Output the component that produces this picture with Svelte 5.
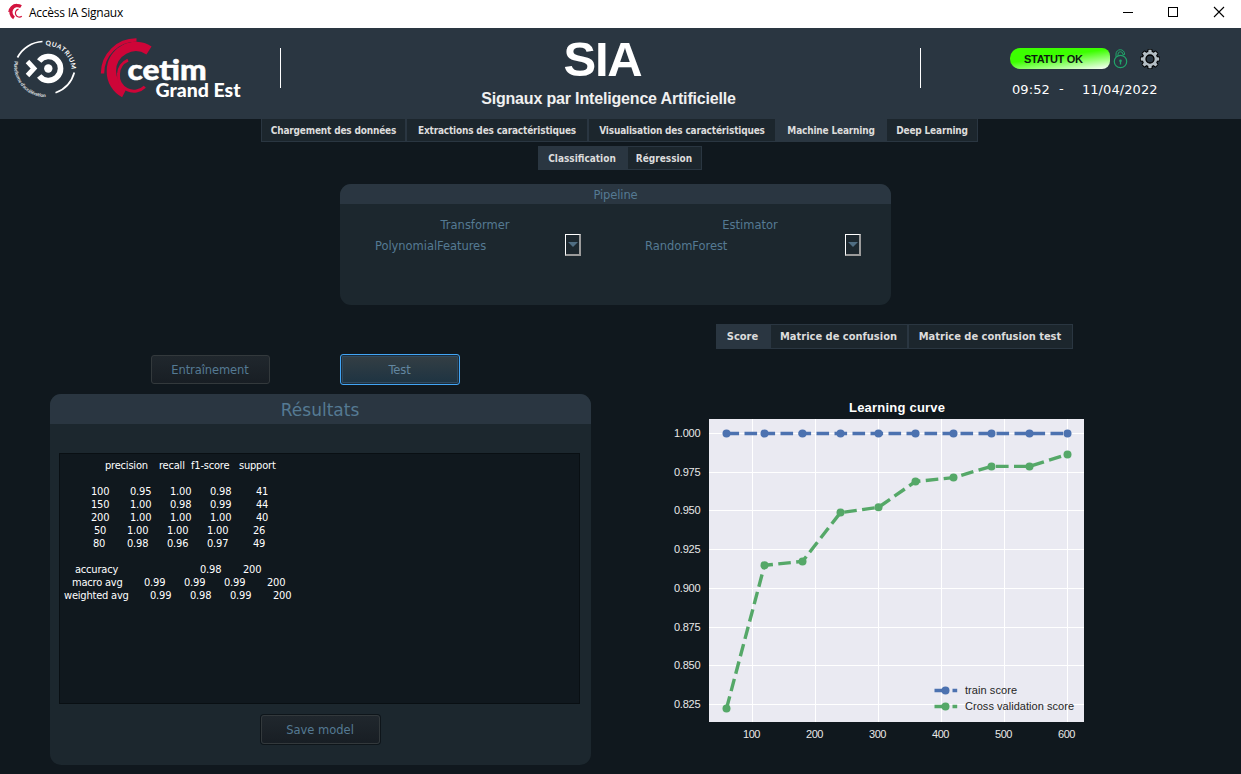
<script>
  const mainTabs = [
    { label: 'Chargement des données', w: 145 },
    { label: 'Extractions des caractéristiques', w: 182 },
    { label: 'Visualisation des caractéristiques', w: 188 },
    { label: 'Machine Learning', w: 110, active: true },
    { label: 'Deep Learning', w: 92 }
  ];
  const subTabs = [
    { label: 'Classification', w: 89, active: true },
    { label: 'Régression', w: 75 }
  ];
  const scoreTabs = [
    { label: 'Score', w: 54, active: true },
    { label: 'Matrice de confusion', w: 138 },
    { label: 'Matrice de confusion test', w: 165 }
  ];
  const selectors = [
    { title: 'Transformer', value: 'PolynomialFeatures' },
    { title: 'Estimator', value: 'RandomForest' }
  ];

  // Each cell is [start offset, text]; the report is laid out with uneven columns.
  const report = [
    [[45, 'precision'], [99, 'recall'], [131, 'f1-score'], [179, 'support']],
    [],
    [[31, '100'], [70, '0.95'], [110, '1.00'], [150, '0.98'], [196, '41']],
    [[31, '150'], [70, '1.00'], [110, '0.98'], [150, '0.99'], [196, '44']],
    [[31, '200'], [70, '1.00'], [110, '1.00'], [150, '1.00'], [196, '40']],
    [[34, '50'], [67, '1.00'], [107, '1.00'], [147, '1.00'], [193, '26']],
    [[33, '80'], [67, '0.98'], [107, '0.96'], [147, '0.97'], [193, '49']],
    [],
    [[15, 'accuracy'], [140, '0.98'], [183, '200']],
    [[12, 'macro avg'], [84, '0.99'], [124, '0.99'], [164, '0.99'], [207, '200']],
    [[4, 'weighted avg'], [90, '0.99'], [130, '0.98'], [170, '0.99'], [213, '200']]
  ];
  const columns = (row) =>
    row.map((c, i) => (i ? c[0] - row[i - 1][0] : c[0]) + 'px').join(' ') + ' 1fr';

  const xTicks = [100, 200, 300, 400, 500, 600].map((v, i) => ({ v, x: 92.5 + i * 63 }));
  const yTicks = [
    ['1.000', 38.5], ['0.975', 77.5], ['0.950', 115.5], ['0.925', 154.5],
    ['0.900', 193.5], ['0.875', 232.5], ['0.850', 270.5], ['0.825', 309.5]
  ];
  const px = [66.5, 104.5, 142.5, 180.5, 218.5, 255.5, 293.5, 331.5, 369.5, 407.5];
  const cv = [313.5, 170.3, 166.4, 117.6, 112.3, 86.5, 82.6, 71.4, 71.4, 59.4];
  const cvLine = px.map((x, i) => `${x},${cv[i]}`).join(' ');
  const teeth = [0, 45, 90, 135, 180, 225, 270, 315];
</script>

{#snippet tabs(items, cls)}
  <nav class="tabs {cls}">
    {#each items as t}
      <button class="tab" class:active={t.active} style="width:{t.w}px">{t.label}</button>
    {/each}
  </nav>
{/snippet}

<div class="window">
  <div class="titlebar">
    <svg class="appicon" width="16" height="18" viewBox="0 0 16 18" fill="none">
      <path d="M13 3.600A6 6 0 0 0 6 14.800" stroke="#d3143f" stroke-width="3.200" />
      <path d="M0.900 9A8 8 0 0 1 9 1.500" stroke="#d3143f" stroke-width="1.300" />
      <path d="M10.500 6.200A4 4 0 1 0 13.800 13.300" stroke="#d3143f" stroke-width="1.200" />
    </svg>
    <span class="apptitle">Accèss IA Signaux</span>
    <svg class="winctl" width="104" height="12" viewBox="0 0 104 12" fill="none" stroke="#000" shape-rendering="crispEdges">
      <path d="M0 6.5h10" />
      <path d="M45.5 1.5h9v9h-9z" />
      <path d="M91 1l10 10M101 1l-10 10" shape-rendering="auto" stroke-width="1.1" />
    </svg>
  </div>

  <header class="header">
    <svg class="logos" width="250" height="91" viewBox="0 28 250 91">
      <g fill="none" stroke="#fff">
        <path d="M17.500 57.500A30 30 0 0 1 42.500 41.500" stroke-width="1.700" />
        <path d="M74.300 72.500A30 30 0 0 1 55.500 92.800" stroke-width="1.700" />
        <path d="M39.200 61A12 12 0 1 1 39.200 76" stroke-width="5.600" />
        <path d="M27.500 61.500l6.500 7-6.500 7" stroke-width="4.800" />
      </g>
      <circle cx="48.300" cy="68.500" r="4.200" fill="#fff" />
      <path id="arcTop" d="M45.500 45.500A25.500 25.500 0 0 1 71.500 73" fill="none" />
      <path id="arcLow" d="M14.500 61A31.500 31.500 0 0 0 54 96" fill="none" />
      <text class="q1"><textPath href="#arcTop" textLength="39">QUATRIUM</textPath></text>
      <text class="q2"><textPath href="#arcLow" textLength="54">Plateforme d'accélération</textPath></text>
      <g fill="none" stroke="#ce0538">
        <path d="M102.500 73.500A33.500 33.500 0 0 1 136.500 40" stroke-width="3.400" />
        <path d="M149 50.500A24.300 24.300 0 0 0 111.400 71A24.300 24.300 0 0 0 124.300 93" stroke-width="9.400" />
        <path d="M128 60.200A15.500 15.500 0 0 0 118.500 74A15.500 15.500 0 0 0 144.800 86.800" stroke-width="3" />
      </g>
      <text class="cetim" x="127.500" y="80" textLength="79" lengthAdjust="spacingAndGlyphs">cetim</text>
      <text class="grand" x="155.500" y="96.500" textLength="85" lengthAdjust="spacingAndGlyphs">Grand Est</text>
    </svg>
    <i class="rule r1"></i>
    <div class="brand">
      <h1>SIA</h1>
      <p>Signaux par Inteligence Artificielle</p>
    </div>
    <i class="rule"></i>
    <div class="status">
      <div class="statrow">
        <span class="pill">STATUT OK</span>
        <svg class="lock" width="16" height="22" viewBox="0 0 16 22" fill="none" stroke="#21a56a" stroke-width="1.200">
          <circle cx="7.500" cy="13.500" r="6.200" />
          <path d="M3 8.800V6A4.300 4.300 0 0 1 11.600 6V6.600H9.900V6.200A2.400 2.400 0 0 0 5 6.200V7.600" stroke-width="1" />
          <path d="M7.500 13v3.500" stroke-width="1.300" />
          <circle cx="7.500" cy="12.700" r="1.300" fill="#21a56a" stroke="none" />
        </svg>
        <svg class="gear" width="22" height="22" viewBox="-11 -11 22 22">
          <g fill="#000" stroke="#000" stroke-width="2" stroke-linejoin="round">
            {#each teeth as a}
              <path d="M-2 -6L-1.500 -9H1.500L2 -6Z" transform="rotate({a})" />
            {/each}
            <circle r="7" />
          </g>
          <g fill="#b4bec4">
            {#each teeth as a}
              <path d="M-2 -5L-1.500 -9.200H1.500L2 -5Z" transform="rotate({a})" />
            {/each}
            <circle r="7.200" />
          </g>
          <circle r="4" fill="#2a3641" stroke="#000" stroke-width="1.300" />
        </svg>
      </div>
      <div class="clock"><span>09:52</span><span class="dash">-</span><span>11/04/2022</span></div>
    </div>
  </header>

  <main>
    {@render tabs(mainTabs, 'maintabs')}
    {@render tabs(subTabs, 'subtabs')}

    <section class="panel pipeline">
      <h2>Pipeline</h2>
      <div class="selectors">
        {#each selectors as s}
          <div class="selector">
            <div class="seltitle">{s.title}</div>
            <div class="selrow">
              <span>{s.value}</span>
              <button class="drop" aria-label={s.title}><i></i></button>
            </div>
          </div>
        {/each}
      </div>
    </section>

    <div class="work">
      <div class="left">
        <div class="actions">
          <button class="btn">Entraînement</button>
          <button class="btn focus">Test</button>
        </div>
        <section class="panel results">
          <h2>Résultats</h2>
          <div class="report">
            {#each report as row}
              <div class="line" style="grid-template-columns:{columns(row)}">
                <span></span>{#each row as c}<span>{c[1]}</span>{/each}
              </div>
            {/each}
          </div>
          <button class="btn save">Save model</button>
        </section>
      </div>

      <div class="right">
        {@render tabs(scoreTabs, 'scoretabs')}
        <svg class="chart" width="440" height="355" viewBox="0 0 440 355">
          <text class="title" x="237" y="17" text-anchor="middle" textLength="96">Learning curve</text>
          <rect x="49" y="24" width="375" height="303" fill="#eaeaf2" />
          <g stroke="#fff" stroke-width="1" shape-rendering="crispEdges">
            {#each xTicks as t}<path d="M{t.x} 24V327" />{/each}
            {#each yTicks as t}<path d="M49 {t[1]}H424" />{/each}
          </g>
          <g fill="none" stroke-width="3.400" stroke-dasharray="12.600 5.400">
            <path d="M66.500 38.500H407.500" stroke="#4c72b0" />
            <polyline points={cvLine} stroke="#55a868" stroke-linejoin="round" />
            <path d="M274.500 295.500h22.700" stroke="#4c72b0" />
            <path d="M274.500 311.500h22.700" stroke="#55a868" />
          </g>
          {#each px as x, i}
            <circle cx={x} cy="38.500" r="4" fill="#4c72b0" />
            <circle cx={x} cy={cv[i]} r="4" fill="#55a868" />
          {/each}
          <circle cx="285.500" cy="295.500" r="4" fill="#4c72b0" />
          <circle cx="285.500" cy="311.500" r="4" fill="#55a868" />
          <text class="legend" x="305" y="299" textLength="52">train score</text>
          <text class="legend" x="305" y="315" textLength="109">Cross validation score</text>
          {#each xTicks as t}<text class="tick" x={t.x - 0.8} y="343" text-anchor="middle" textLength="17.500">{t.v}</text>{/each}
          {#each yTicks as t}<text class="tick" x="40.500" y={t[1] + 3.5} text-anchor="end" textLength="26.500">{t[0]}</text>{/each}
        </svg>
      </div>
    </div>
  </main>
</div>

<style>
  :global(body) { margin: 0; background: #10181e; }
  * { box-sizing: border-box; }
  .window {
    width: 1241px; height: 774px; overflow: hidden;
    display: flex; flex-direction: column;
    background: #10181e; font-family: "DejaVu Sans", Verdana, sans-serif;
  }
  button { font: inherit; margin: 0; padding: 0; }
  h1, h2, p { margin: 0; font-weight: normal; }

  .titlebar { height: 28px; flex: none; background: #fff; display: flex; align-items: flex-start; padding-left: 8px; }
  .appicon { margin-top: 3px; }
  .apptitle { margin: 4px 0 0 5px; font: 12px/18px "Open Sans", sans-serif; letter-spacing: -0.25px; color: #000; }
  .winctl { margin: 6px 14px 0 auto; }

  .header { height: 91px; flex: none; background: #2a3641; display: flex; align-items: flex-start; color: #fff; }
  .logos { flex: none; }
  .q1 { font: bold 6.5px Lato, sans-serif; fill: #fff; }
  .q2 { font: bold 4.8px Lato, sans-serif; fill: #e4e8ea; }
  .cetim { font: 900 28px Lato, sans-serif; fill: #fff; stroke: #fff; stroke-width: 0.5px; }
  .grand { font: 900 18px Lato, sans-serif; fill: #fff; }
  .rule { width: 1px; height: 40px; background: #fff; margin-top: 20px; flex: none; }
  .r1 { margin-left: 30px; }
  .brand { width: 639px; text-align: center; font-family: "Liberation Sans", Arial, sans-serif; }
  h1 { font-size: 49px; line-height: 56px; font-weight: bold; letter-spacing: -1.2px; margin: 3px 0 0 4px; }
  .brand p { font-size: 16px; font-weight: bold; line-height: 20px; letter-spacing: -0.17px; color: #f0f0f0; margin: 2px 0 0 16px; }
  .status { margin-left: 89px; }
  .statrow { display: flex; align-items: flex-start; padding-top: 20px; height: 46px; }
  .pill {
    width: 100px; height: 21px; border-radius: 10px 8px 8px 10px; padding-left: 14px;
    background: linear-gradient(172deg, #3cff00 42%, #fff 100%);
    font: bold 11px/22px "Liberation Sans", Arial, sans-serif; color: #0c1a10; letter-spacing: -0.3px;
  }
  .lock { margin: 0 0 0 3px; }
  .gear { margin-left: 10px; }
  .clock { display: flex; font-size: 13px; line-height: 18px; letter-spacing: 0.08px; margin: 7px 0 0 2px; }
  .dash { width: 5px; margin: -1px 18px 0 9px; }

  main { flex: 1; display: flex; flex-direction: column; }
  .tabs { display: flex; }
  .tab {
    border: 1px solid #2a3641; background: #1c262d; color: #dcdcdc; white-space: nowrap;
    font: bold 10px/20px "DejaVu Sans Condensed", "DejaVu Sans", sans-serif; font-stretch: condensed;
    height: 24px; text-align: center; padding-top: 1px;
  }
  .tab.active { background: #2a3641; }
  .maintabs { margin-left: 261px; }
  .maintabs .tab { height: 23px; border-top: 0; padding-top: 2px; letter-spacing: -0.18px; }
  .subtabs { margin: 4px 0 0 538px; }
  .subtabs .tab { padding-top: 2px; padding-right: 1px; }
  .scoretabs { margin-left: 125px; }
  .scoretabs .tab { height: 25px; font-size: 11px; padding: 1px 1px 0 0; }

  .panel { background: #1c272e; border-radius: 11px; overflow: hidden; color: #557a93; }
  .panel h2 { background: #2a3641; text-align: center; color: #557a93; }
  .pipeline { width: 551px; height: 121px; margin: 14px 0 0 340px; font-size: 11px; }
  .pipeline h2 { font-size: 11.5px; line-height: 22px; height: 20px; letter-spacing: -0.1px; }
  .selectors { display: flex; padding: 12px 0 0 35px; }
  .selector { width: 206px; margin-right: 64px; flex: none; }
  .selector + .selector { width: 216px; margin-right: 0; }
  .seltitle { text-align: center; line-height: 18px; margin-right: 6px; font-size: 11.5px; }
  .selrow { display: flex; justify-content: space-between; line-height: 24px; font-size: 11.5px; letter-spacing: -0.05px; }
  .drop {
    width: 16px; height: 22px; border: 1px solid #fff; border-right: 2px solid #9b9b9b; border-bottom: 2px solid #9b9b9b;
    background: #1c272e; display: flex; justify-content: center; padding-top: 7px;
  }
  .drop i { width: 0; height: 0; border: 5px solid transparent; border-top: 5px solid #4f6d82; border-bottom: 0; }

  .work { display: flex; margin-top: 19px; }
  .left { width: 541px; margin-left: 50px; flex: none; }
  .actions { display: flex; padding: 30px 0 0 101px; height: 70px; align-items: flex-start; }
  .btn {
    width: 119px; height: 29px; border: 1px solid #33393c; border-radius: 3px; margin-top: 1px; padding: 1px 1px 0 0;
    background: linear-gradient(#20272d, #181e24); color: #557a93; font-size: 11.5px; line-height: 26px; letter-spacing: -0.1px;
  }
  .btn.focus {
    width: 120px; height: 31px; margin: 0 0 0 70px; border-color: #42a5f5; color: #6387a0; line-height: 28px;
    background: linear-gradient(#353f44, #1d3342); box-shadow: inset 0 0 0 1px #1c2b38, inset 0 0 0 2px #2f4a60;
  }
  .results { height: 371px; display: flex; flex-direction: column; }
  .results h2 { height: 30px; font-size: 17px; line-height: 32px; flex: none; padding-right: 1px; }
  .report {
    width: 521px; height: 251px; margin: 29px 0 0 9px; border: 1px solid #090f13; background: #10181e;
    padding-top: 5px; font: 11px/13px "DejaVu Sans Condensed", "DejaVu Sans", sans-serif; font-stretch: condensed;
    letter-spacing: -0.2px; color: #fff; flex: none;
  }
  .line { display: grid; height: 13px; white-space: nowrap; }
  .save { width: 119px; margin: 11px auto 0 211px; box-shadow: 0 0 0 1px #0e151a; letter-spacing: 0; }

  .right { flex: none; }
  .chart { display: block; margin: 46px 0 0 69px; font-family: "Liberation Sans", Arial, sans-serif; }
  .title { font-size: 13px; font-weight: bold; fill: #fff; }
  .tick { font-size: 11px; fill: #e8e8e8; }
  .legend { font-size: 11px; fill: #262626; }
</style>
